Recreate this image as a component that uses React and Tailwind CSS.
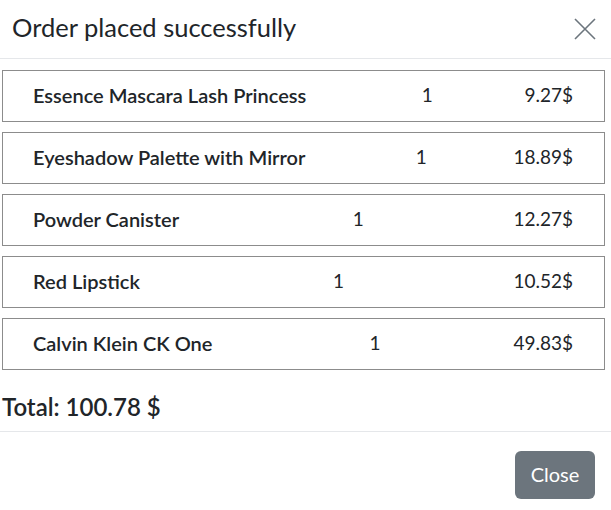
import React from 'react'

const ITEMS = [
  { title: 'Essence Mascara Lash Princess', quantity: 1, price: 9.27 },
  { title: 'Eyeshadow Palette with Mirror', quantity: 1, price: 18.89 },
  { title: 'Powder Canister', quantity: 1, price: 12.27 },
  { title: 'Red Lipstick', quantity: 1, price: 10.52 },
  { title: 'Calvin Klein CK One', quantity: 1, price: 49.83 },
]

export default function App() {
  const total = ITEMS.reduce((sum, item) => sum + item.price * item.quantity, 0)

  return (
    <div className="w-[611px] h-[510px] bg-white text-[#212529] font-['Lato',sans-serif] overflow-hidden">
      {/* header */}
      <div className="flex h-[59px] items-center justify-between border-b border-[#e5e7ea] pl-[12px] pr-[14px]">
        <h5 className="text-[25.5px] leading-none pb-[2px]">Order placed successfully</h5>
        <button className="text-[#6c757d]" aria-label="Close">
          <svg width="24" height="24" viewBox="0 0 24 24" fill="none" stroke="currentColor" strokeWidth="1.6">
            <path d="M2 2 L22 22 M22 2 L2 22" />
          </svg>
        </button>
      </div>

      {/* body */}
      <div className="pt-[11px] pl-[2px] pr-[6px]">
        <div className="flex flex-col gap-[10px]">
          {ITEMS.map((item) => (
            <div
              key={item.title}
              className="flex h-[52px] items-center justify-between border border-[#8c8c8c] pl-[30px] pr-[31px] pb-[2px] text-[19px]"
            >
              <span className="font-semibold text-[20px]">{item.title}</span>
              <span className="ml-[24px]">{item.quantity}</span>
              <span>{item.price}$</span>
            </div>
          ))}
        </div>
        <div className="pt-[22px] pb-[9px] text-[24px] font-semibold leading-[30px]">
          Total: {total.toFixed(2)} $
        </div>
      </div>

      {/* footer */}
      <div className="flex justify-end border-t border-[#e5e7ea] pt-[19px] pr-[16px]">
        <button className="h-[48px] w-[80px] rounded-[6px] bg-[#6c757d] pb-[3px] text-[20px] text-white">Close</button>
      </div>
    </div>
  )
}
